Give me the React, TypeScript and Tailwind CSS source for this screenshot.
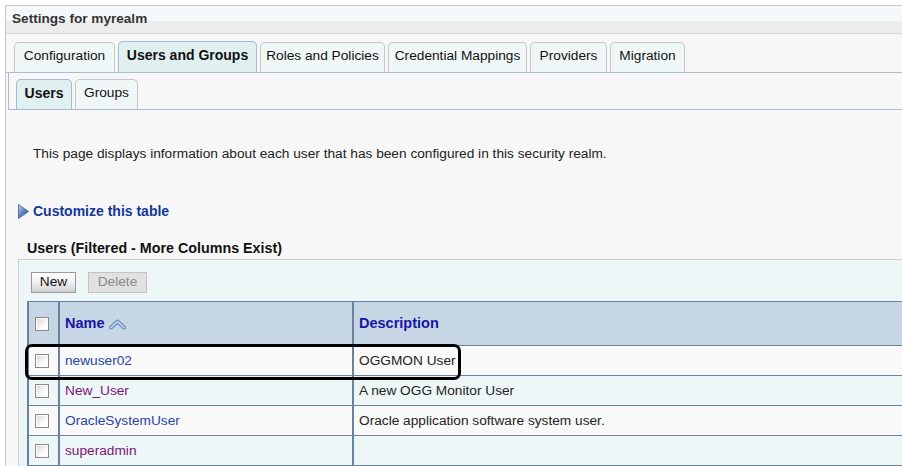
import React from "react";

const font = { fontFamily: '"Liberation Sans", Arial, sans-serif' };

function Checkbox() {
  return (
    <div className="w-[14px] h-[14px] border border-[#8a8a8a] bg-[linear-gradient(135deg,#d6d6d6,#ffffff_70%)] shadow-[inset_1px_1px_0_#ffffff]" />
  );
}

function SortIcon() {
  return (
    <svg width="17" height="11" viewBox="0 0 17 11" className="ml-[4px]">
      <path d="M2 8.5 L8.5 2.5 L15 8.5" fill="none" stroke="#6e8fbf" strokeWidth="4" strokeLinejoin="round" strokeLinecap="round" />
      <path d="M2 8.5 L8.5 2.5 L15 8.5" fill="none" stroke="#c9d9ee" strokeWidth="1.6" strokeLinejoin="round" strokeLinecap="round" />
    </svg>
  );
}

function Triangle() {
  return (
    <svg width="11" height="15" viewBox="0 0 11 15" className="mr-[4px]">
      <defs>
        <linearGradient id="tg" x1="0" y1="0" x2="1" y2="1">
          <stop offset="0" stopColor="#c7d6ef" />
          <stop offset="0.5" stopColor="#5d7fc0" />
          <stop offset="1" stopColor="#2a4a92" />
        </linearGradient>
      </defs>
      <polygon points="0.5,0.5 10.5,7.5 0.5,14.5" fill="url(#tg)" stroke="#3f5d9c" strokeWidth="0.8" />
    </svg>
  );
}

const tabs = [
  { label: "Configuration", w: "w-[101px]" },
  { label: "Users and Groups", w: "w-[139px]", active: true },
  { label: "Roles and Policies", w: "w-[125px]" },
  { label: "Credential Mappings", w: "w-[139px]" },
  { label: "Providers", w: "w-[77px]" },
  { label: "Migration", w: "w-[75px]" },
];

const rows = [
  { name: "newuser02", desc: "OGGMON User", visited: false },
  { name: "New_User", desc: "A new OGG Monitor User", visited: true },
  { name: "OracleSystemUser", desc: "Oracle application software system user.", visited: false },
  { name: "superadmin", desc: "", visited: true },
];

export default function App() {
  return (
    <div className="relative w-[902px] h-[466px] overflow-hidden bg-white text-[13.7px] text-[#222]" style={font}>
      <div className="ml-[5px] mt-[5px] h-[461px] border-l border-t border-[#c9c9c9] bg-[#f7f7f7]">
        {/* title */}
        <div className="h-[28px] border-b border-[#d6d6d6] bg-[linear-gradient(#f4f8f8_0,#f4f8f8_55%,#ececec_55%,#ececec_100%)] pl-[6px] pb-[1px] flex items-center">
          <span className="font-bold text-[13.6px] text-[#333]">Settings for myrealm</span>
        </div>
        {/* tabs */}
        <div className="pt-[7px] pl-[8px] flex items-end gap-[3px] border-b border-[#a7bad6]">
          {tabs.map((t) => (
            <div
              key={t.label}
              className={
                t.active
                  ? `${t.w} h-[31px] pb-[3px] flex items-center justify-center rounded-t-[5px] border border-b-0 border-[#a7bad6] bg-[#e0efef] font-bold text-[14px] text-[#111]`
                  : `${t.w} h-[30px] pb-[2px] flex items-center justify-center rounded-t-[5px] border border-b-0 border-[#c6c6c6] bg-[#f0f7f7] text-[#111]`
              }
            >
              {t.label}
            </div>
          ))}
        </div>
        {/* subtabs */}
        <div className="ml-[2px] pt-[6px] pl-[7px] flex items-end gap-[3px] border-l border-b border-[#a7bad6]">
          <div className="w-[56px] h-[30px] pb-[2px] flex items-center justify-center rounded-t-[5px] border border-b-0 border-[#a7bad6] bg-[#e0efef] font-bold text-[14px] text-[#111]">
            Users
          </div>
          <div className="w-[63px] h-[30px] pb-[2px] flex items-center justify-center rounded-t-[5px] border border-b-0 border-[#c6c6c6] bg-[#f0f7f7] text-[#111]">
            Groups
          </div>
        </div>
        {/* content */}
        <div className="pl-[27px] pt-[36px] leading-[16px] text-[#222]">
          This page displays information about each user that has been configured in this security realm.
        </div>
        <div className="pl-[12px] mt-[41px] flex items-center font-bold text-[14px] text-[#12379a] leading-[16px]">
          <Triangle />
          Customize this table
        </div>
        <div className="pl-[21px] mt-[21px] font-bold text-[14.3px] text-[#111] leading-[16px]">
          Users (Filtered - More Columns Exist)
        </div>
        <div className="ml-[12px] mt-[3px] border-l border-t border-[#cfcfcf] bg-[#eef7f7] pl-[8px] h-[300px]">
          <div className="pl-[4px] pt-[12px] flex gap-[12px]">
            <div className="w-[45px] h-[21px] flex items-center justify-center border border-[#9a9a9a] bg-[linear-gradient(#ffffff,#f0f0f0_50%,#cfcfcf)] text-[#111]">
              New
            </div>
            <div className="w-[59px] h-[21px] flex items-center justify-center border border-[#c4c4c4] bg-[#e1e1e1] text-[#8a8a8a]">
              Delete
            </div>
          </div>
          <div className="mt-[8px] border-t border-l-2 border-[#6a829f]">
            <div className="flex h-[44px] bg-[#c7d6e5] border-b border-[#6a829f]">
              <div className="w-[29px] flex items-center pl-[6px]">
                <Checkbox />
              </div>
              <div className="w-[294px] border-l-2 border-[#6a829f] flex items-center pl-[5px] pt-[1px] font-bold text-[14.5px] text-[#1515a6]">
                Name
                <SortIcon />
              </div>
              <div className="flex-1 border-l-2 border-[#6a829f] flex items-center pl-[5px] pt-[1px] font-bold text-[14.5px] text-[#1515a6]">
                Description
              </div>
            </div>
            {rows.map((r, i) => (
              <div
                key={r.name}
                className={`flex h-[30px] border-b border-[#6a829f] ${i % 2 === 0 ? "bg-[#f9f9f9]" : "bg-[#eef7f7]"}`}
              >
                <div className="w-[29px] flex items-center pl-[6px]">
                  <Checkbox />
                </div>
                <div
                  className={`w-[294px] border-l-2 border-[#6a829f] flex items-center pl-[5px] pt-[2px] ${r.visited ? "text-[#7b1479]" : "text-[#2545a8]"}`}
                >
                  {r.name}
                </div>
                <div className="flex-1 border-l-2 border-[#6a829f] flex items-center pl-[5px] pt-[2px] text-[#222]">
                  {r.desc}
                </div>
              </div>
            ))}
          </div>
        </div>
      </div>
      {/* highlight annotation */}
      <div className="absolute left-[25px] top-[344px] w-[436px] h-[36px] border-[3px] border-black rounded-[7px] pointer-events-none" />
    </div>
  );
}
